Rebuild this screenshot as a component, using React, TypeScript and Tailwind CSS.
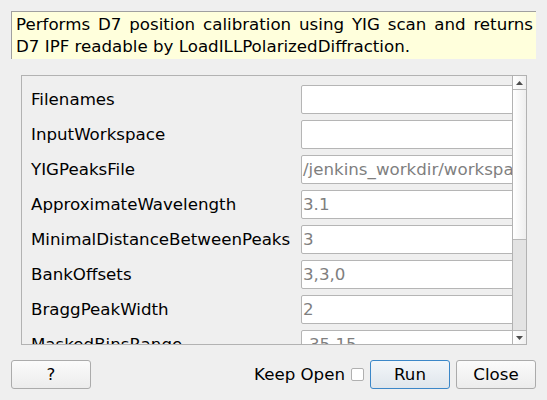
import React from "react";

const rows: { label: string; value: string }[] = [
  { label: "Filenames", value: "" },
  { label: "InputWorkspace", value: "" },
  { label: "YIGPeaksFile", value: "/jenkins_workdir/workspace/" },
  { label: "ApproximateWavelength", value: "3.1" },
  { label: "MinimalDistanceBetweenPeaks", value: "3" },
  { label: "BankOffsets", value: "3,3,0" },
  { label: "BraggPeakWidth", value: "2" },
  { label: "MaskedBinsRange", value: "-35,15" },
];

function Btn({ children, primary }: { children: React.ReactNode; primary?: boolean }) {
  return (
    <div
      className={
        primary
          ? "w-[80px] h-[29px] rounded-[3px] border border-[#3b87c8] bg-gradient-to-b from-[#f3f6f9] to-[#dfe6ec] flex items-center justify-center text-black"
          : "w-[80px] h-[29px] rounded-[3px] border border-[#ababab] bg-gradient-to-b from-[#fbfbfb] to-[#ececec] flex items-center justify-center text-black"
      }
    >
      {children}
    </div>
  );
}

export default function App() {
  return (
    <div className="w-[547px] h-[400px] bg-[#efefef] overflow-hidden flex flex-col [font-family:'DejaVu_Sans',sans-serif] text-[16.67px] text-black">
      <div className="mt-[11px] ml-[11px] w-[525px] h-[48px] border-t border-l border-[#a0a0a0] bg-[#ffffdc] pl-[4px] pr-[3px] pt-[2px] leading-[21.7px] shrink-0">
        <div className="text-justify [text-align-last:justify] whitespace-nowrap">
          Performs D7 position calibration using YIG scan and returns
        </div>
        <div className="whitespace-nowrap">D7 IPF readable by LoadILLPolarizedDiffraction.</div>
      </div>

      <div className="mt-[16px] ml-[21px] w-[506px] h-[270px] border border-[#b2b2b2] flex shrink-0">
        <div className="flex-1 overflow-hidden pt-[9px] pl-[9px]">
          <div className="flex flex-col gap-[6px]">
            {rows.map((r) => (
              <div key={r.label} className="flex items-center h-[29px] shrink-0">
                <div className="w-[270px] shrink-0 whitespace-nowrap">{r.label}</div>
                <div className="w-[240px] h-[29px] shrink-0 border border-[#b5b5b5] rounded-[2px] bg-white pl-[1px] flex items-center text-[#7f7f7f] whitespace-nowrap overflow-hidden">
                  {r.value}
                </div>
              </div>
            ))}
          </div>
        </div>
        <div className="w-[14px] border-l border-[#b2b2b2] flex flex-col shrink-0">
          <div className="h-[14px] border-b border-[#b8b8b8] bg-gradient-to-r from-white to-[#f0f0f0] flex items-center justify-center">
            <svg width="7" height="4" viewBox="0 0 7 4">
              <polygon points="0,4 7,4 3.5,0" fill="#4d4d4d" />
            </svg>
          </div>
          <div className="h-[150px] border-b border-[#b8b8b8] bg-gradient-to-r from-white to-[#eeeeee]" />
          <div className="h-[91px] border-b border-[#b8b8b8] bg-[#e3e3e3]" />
          <div className="h-[13px] bg-gradient-to-r from-white to-[#f0f0f0] flex items-center justify-center">
            <svg width="7" height="4" viewBox="0 0 7 4">
              <polygon points="0,0 7,0 3.5,4" fill="#4d4d4d" />
            </svg>
          </div>
        </div>
      </div>

      <div className="mt-[15px] px-[11px] flex items-center shrink-0">
        <Btn>?</Btn>
        <div className="flex-1" />
        <span className="mr-[6px]">Keep Open</span>
        <div className="w-[13px] h-[13px] border border-[#b0b0b0] rounded-[2px] bg-white mr-[6px]" />
        <Btn primary>Run</Btn>
        <div className="w-[6px]" />
        <Btn>Close</Btn>
      </div>
    </div>
  );
}
